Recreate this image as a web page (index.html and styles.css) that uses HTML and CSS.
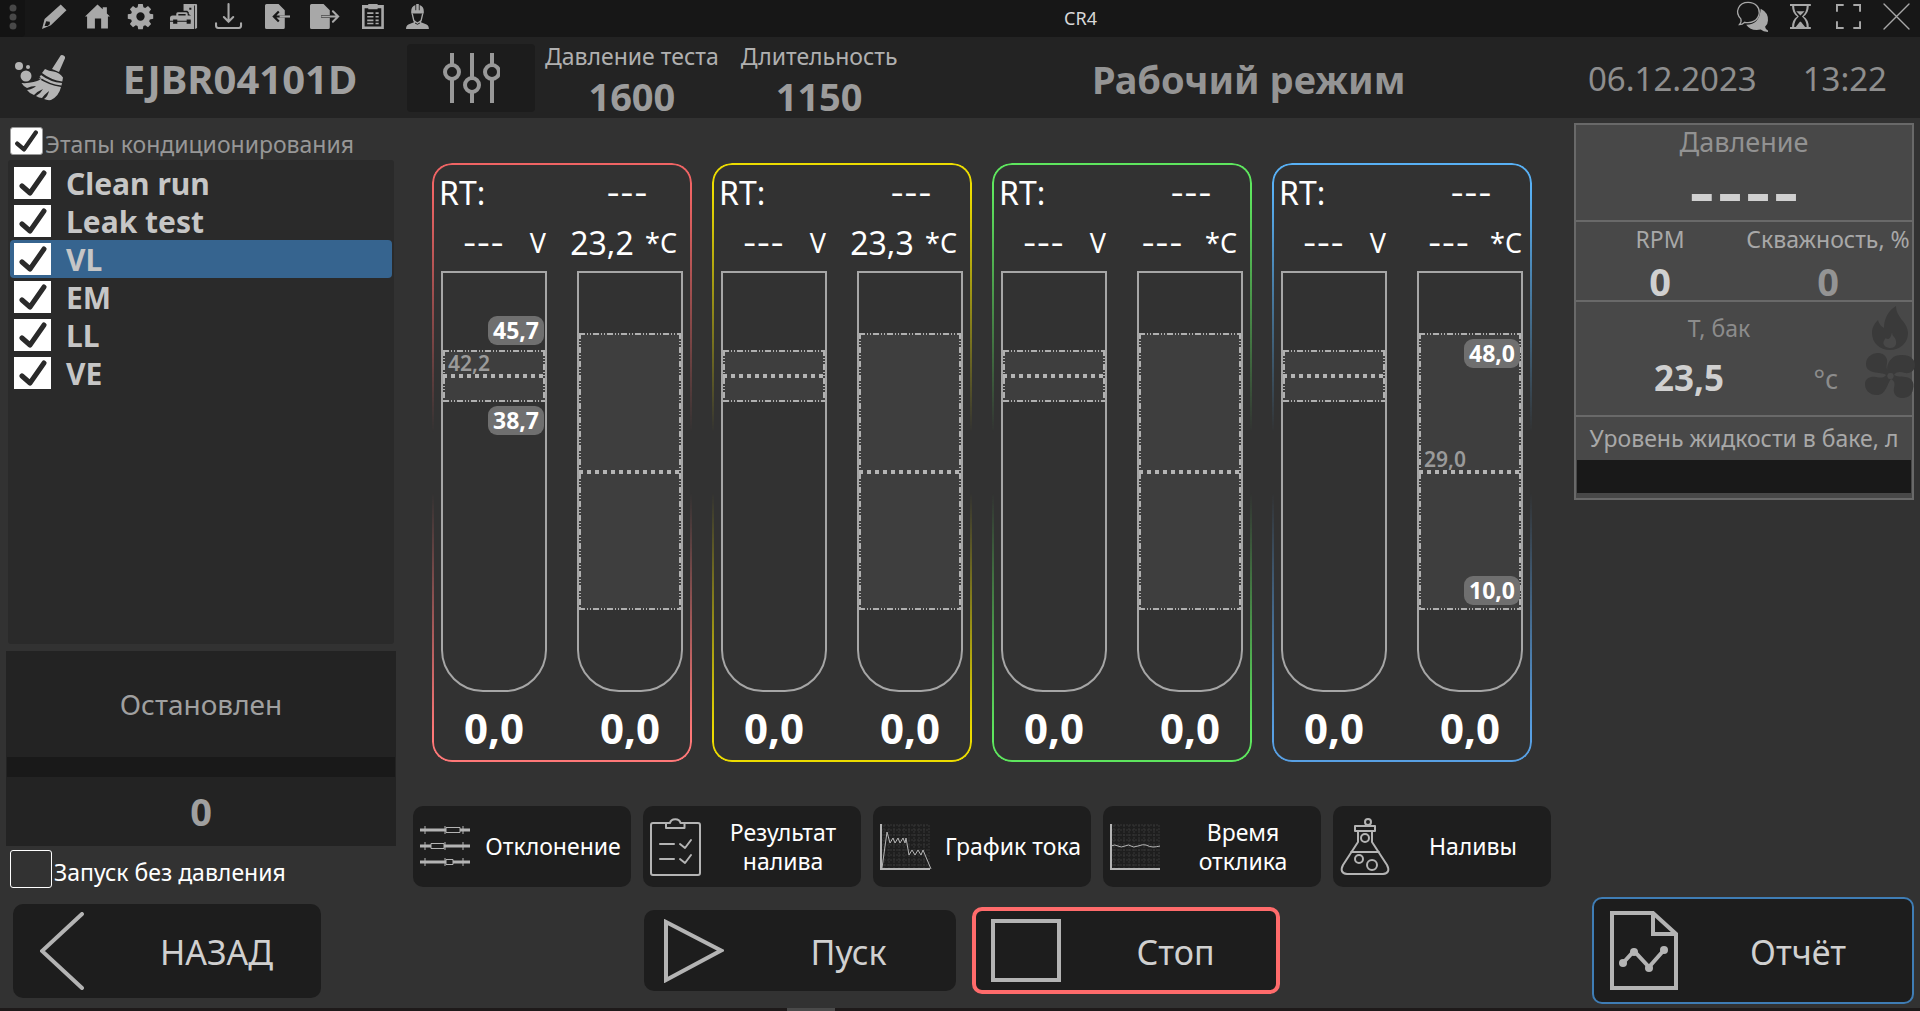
FILE: index.html
```html
<!DOCTYPE html>
<html lang="ru">
<head>
<meta charset="utf-8">
<meta name="viewport" content="width=device-width, initial-scale=1">
<title>CR4</title>
<link rel="stylesheet" href="styles.css">
</head>
<body>
<header class="titlebar">
  <button class="tb-dots" aria-label="Меню"><svg width="8" height="26" viewBox="0 0 8 26"><circle cx="4" cy="4" r="3.5"/><circle cx="4" cy="13" r="3.5"/><circle cx="4" cy="22" r="3.5"/></svg></button>
  <nav class="tb-group tb-first">
    <button aria-label="Правка"><svg viewBox="0 0 24 24"><path fill-rule="evenodd" d="M18 .5 23.500 6 8.500 20.500 0 24l2.500-9.500zM4 16.500l-1.500 4.500 3 0 2-1.500 0-2.500z"/></svg></button>
    <button aria-label="Домой"><svg viewBox="0 0 24 24"><path d="M12 .5 17 5V3h4v6l3 3h-2v11.500h-6.500V14h-6v9.500H2V12H0z"/></svg></button>
    <button aria-label="Настройки"><svg viewBox="0 0 24 24"><path fill-rule="evenodd" d="M9.800 0h4.400l.6 3.200 1.700.7L19.200 2l3 3-1.900 2.700.7 1.700 3.200.5v4.300l-3.200.6-.7 1.700 1.900 2.700-3 3-2.700-1.900-1.700.7-.6 3.200H9.800l-.6-3.200-1.700-.7-2.700 1.900-3-3 1.900-2.700-.7-1.700-3.200-.6V9.900L3 9.400l.7-1.700L1.800 5l3-3 2.700 1.900 1.700-.7zM12 8a4 4 0 1 0 0 8 4 4 0 0 0 0-8z"/></svg></button>
    <button aria-label="Инструменты"><svg viewBox="0 0 26 24"><path fill-rule="evenodd" d="M13 0h12a1 1 0 0 1 1 1v22l-2 1V1.500h-.8V24H20V11l-2-1.500V8l-1.500-1.500H13zM18.500 3.500v2h2v-2z"/><path fill-rule="evenodd" d="M6 11V9.500Q6 8 7.500 8h8Q17 8 17 9.500V11h3q3 0 3 2.500V16h-3v-1h-4v1H7v-1H3v1H0v-2.500Q0 11 2.500 11zm2 0h7V9.500H8zM0 17h3v2h4v-2h9v2h4v-2h3v7H0z"/></svg></button>
  </nav>
  <nav class="tb-group tb-second">
    <button aria-label="Загрузить"><svg viewBox="0 0 26 24"><path class="ln" d="M13 0v17M8.500 12.500 13 17l4.500-4.500M1 18.500V21q0 2 2 2h20q2 0 2-2v-2.500"/></svg></button>
    <button aria-label="Импорт"><svg viewBox="0 0 24 24"><path d="M0 1.500Q0 0 1.500 0H13l6 6v5h-8l3-3-1.500-1.500L7 12l5.500 5.500L14 16l-3-3h8v9.500q0 1.500-1.500 1.500h-16Q0 24 0 22.500z"/><path d="M14 11h10v2H14z"/></svg></button>
    <button aria-label="Экспорт"><svg viewBox="0 0 28 24"><path d="M0 1.500Q0 0 1.500 0H13l6 6v4.500h-8v3h8v9q0 1.500-1.500 1.500h-16Q0 24 0 22.500z"/><path class="ln" d="M12 12h15M22 7l5 5-5 5"/></svg></button>
    <button aria-label="Журнал"><svg viewBox="0 0 22 24"><path fill-rule="evenodd" d="M0 1h6V0h9v1h6v23H0zM2.500 4v17.500h16V4H15v1H6V4z"/><path d="M5 8h6v1.500H5zm8 0h3v1.500h-3zM5 11.500h6V13H5zm8 0h3V13h-3zM5 15h6v1.500H5zm8 0h3v1.500h-3zM5 18h6v1.500H5zm8 0h3v1.500h-3z"/></svg></button>
    <button class="tb-slim" aria-label="Оператор"><svg viewBox="0 0 22 24"><path d="M5 9V7q0-4.500 4-6v5h.8V0h2.500v6h.8V1q4 1.500 4 6v2zM0 24q0-4 4-5l3-1.200L11 20l4-2.200 3 1.200q4 1 4 5z"/><path class="thin" d="M6 9.500 7.500 16 11 18.500 14.500 16 16 9.500M8 16v3M14 16v3"/></svg></button>
  </nav>
  <div class="tb-title">CR4</div>
  <nav class="tb-group tb-second">
    <button aria-label="Сообщения"><svg class="chat" viewBox="0 0 34 32"><path d="M25.500 8q8 4 7.500 12 0 4-3 6.500.5 3 3 4v1.500q-5 0-7.500-2.500-10 2-15-5 14 0 15-16.500z"/><path class="thin" d="M3.500 24.500q2.500-3 1.500-6C-2 11 3 1.500 12.500 1.500c8 0 12 5.500 11.500 11-1 8-8.500 11-15 9.500-2 2-3.500 2.500-5.500 2.500z"/></svg></button>
    <button aria-label="Ожидание"><svg viewBox="0 0 20 24"><path fill-rule="evenodd" d="M0 0h20v2h-2q0 7-5 10 5 3 5 10h2v2H0v-2h2q0-7 5-10Q2 9 2 2H0zm4 2q0 6 4.500 10Q4 16 4 22h1.500l4-5h1l4 5H16q0-6-4.500-10Q16 8 16 2z"/><path d="M6 7h8l-4 4z"/></svg></button>
    <button aria-label="Во весь экран"><svg viewBox="0 0 26 26"><path class="ln sq" d="M1 8V1h7M18 1h7v7M25 18v7h-7M8 25H1v-7"/></svg></button>
    <button aria-label="Закрыть"><svg viewBox="0 0 24 24"><path class="thin" d="m0 0 24 24M24 0 0 24"/></svg></button>
  </nav>
</header>

<section class="infobar">
  <div class="product">
    <svg class="broom" width="50" height="46" viewBox="0 0 50 46"><circle cx="4" cy="11" r="4"/><circle cx="13" cy="12" r="2"/><circle cx="11" cy="21" r="5.500"/><path d="M45 1.500q1-2 3-1.200 2.500.7 2 3L44 17l-7-3zM30 14q4 2 8.500 2.500 6 1 9.500 6l-.7 4Q36 25 27 18zM26 20q9 7 21 8l-.5 2.500Q34 29 24.500 22zM23.500 23.500Q33 30 46 32q-2 9-10 13-4 .5-7-1 4-3 5-8-5 4-7 7-3 0-6-2 5-3 7-7-5 2-9 6-5-2-7-5 6-1 9-4-5 0-9 2-4-2-5.500-5 10 1 21.500-4.500z"/></svg>
    <div class="product-name">EJBR04101D</div>
  </div>
  <button class="tune" aria-label="Параметры"><svg width="58" height="54" viewBox="0 0 58 54"><path d="M10 2v12M10 28v24M30 2v25M30 41v11M50 2v12M50 28v24"/><circle cx="10" cy="21" r="7"/><circle cx="30" cy="34" r="7"/><circle cx="50" cy="21" r="7"/></svg></button>
  <div class="metric"><span>Давление теста</span><b>1600</b></div>
  <div class="metric"><span>Длительность</span><b>1150</b></div>
  <h1>Рабочий режим</h1>
  <time>06.12.2023</time>
  <time>13:22</time>
</section>

<main class="workspace">
  <aside class="left">
    <label class="stages-all"><input type="checkbox" class="box box-all" checked>Этапы кондиционирования</label>
    <ul class="stages">
      <li><label><input type="checkbox" class="box" checked>Clean run</label></li>
      <li><label><input type="checkbox" class="box" checked>Leak test</label></li>
      <li class="selected"><label><input type="checkbox" class="box" checked>VL</label></li>
      <li><label><input type="checkbox" class="box" checked>EM</label></li>
      <li><label><input type="checkbox" class="box" checked>LL</label></li>
      <li><label><input type="checkbox" class="box" checked>VE</label></li>
    </ul>
    <div class="status">
      <div class="status-text">Остановлен</div>
      <div class="status-bar"></div>
      <div class="status-count">0</div>
    </div>
    <label class="nopressure"><input type="checkbox" class="box box-empty">Запуск без давления</label>
  </aside>

  <section class="center">
    <div class="channels">
      <article class="channel red">
        <div class="row"><span class="rt">RT:</span><span class="dash">---</span></div>
        <div class="row"><span class="reading"><i class="dash">---</i><small>V</small></span><span class="reading"><i>23,2</i><small>*C</small></span></div>
        <div class="tubes">
          <div class="tube"><div class="zone volts"><em>42,2</em><b class="tag above">45,7</b><b class="tag below">38,7</b></div></div>
          <div class="tube"><div class="zone temp"></div></div>
        </div>
        <div class="totals"><b>0,0</b><b>0,0</b></div>
      </article>
      <article class="channel yellow">
        <div class="row"><span class="rt">RT:</span><span class="dash">---</span></div>
        <div class="row"><span class="reading"><i class="dash">---</i><small>V</small></span><span class="reading"><i>23,3</i><small>*C</small></span></div>
        <div class="tubes">
          <div class="tube"><div class="zone volts"></div></div>
          <div class="tube"><div class="zone temp"></div></div>
        </div>
        <div class="totals"><b>0,0</b><b>0,0</b></div>
      </article>
      <article class="channel green">
        <div class="row"><span class="rt">RT:</span><span class="dash">---</span></div>
        <div class="row"><span class="reading"><i class="dash">---</i><small>V</small></span><span class="reading"><i class="dash">---</i><small>*C</small></span></div>
        <div class="tubes">
          <div class="tube"><div class="zone volts"></div></div>
          <div class="tube"><div class="zone temp"></div></div>
        </div>
        <div class="totals"><b>0,0</b><b>0,0</b></div>
      </article>
      <article class="channel blue">
        <div class="row"><span class="rt">RT:</span><span class="dash">---</span></div>
        <div class="row"><span class="reading"><i class="dash">---</i><small>V</small></span><span class="reading"><i class="dash">---</i><small>*C</small></span></div>
        <div class="tubes">
          <div class="tube"><div class="zone volts"></div></div>
          <div class="tube"><div class="zone temp"><em>29,0</em><b class="tag high">48,0</b><b class="tag low">10,0</b></div></div>
        </div>
        <div class="totals"><b>0,0</b><b>0,0</b></div>
      </article>
    </div>

    <nav class="tools">
      <button>
        <svg viewBox="0 0 52 58"><g id="rod"><path class="rod" d="M1 12h50"/><path class="hair" d="M6 8v8M26 8v8M44 8v8"/></g><use href="#rod" y="16"/><use href="#rod" y="32"/><path class="slot" d="M27 9.500h14v5H27zM12 25.500h13v5H12zM27 41.500h7v5h-7z"/></svg>
        <span>Отклонение</span>
      </button>
      <button>
        <svg viewBox="0 0 52 58"><path class="pen" d="M17 5H4q-2 0-2 2v48q0 2 2 2h45q2 0 2-2V7q0-2-2-2H36M17 5v5h18.500V5h-4c-1-5-9.500-5-10.500 0zM11 26h14M11 41h14M31 26l5 4 6-8M31 41l5 4 6-8"/></svg>
        <span>Результат налива</span>
      </button>
      <button>
        <svg viewBox="0 0 52 58"><path class="grid" d="M5 7v44M10 7v44M15 7v44M20 7v44M25 7v44M30 7v44M35 7v44M40 7v44M45 7v44M50 7v44M2 7h48M2 12h48M2 17h48M2 22h48M2 27h48M2 32h48M2 37h48M2 42h48M2 47h48"/><path class="axis" d="M2 6v45h49"/><path class="hair" d="M3 50 8 14l3 11 3-5 2 5 3-5 2 5 3-5 2 5 1-5 3 17 3-5 3 5 3-5 3 5 2-5 8 19"/></svg>
        <span>График тока</span>
      </button>
      <button>
        <svg viewBox="0 0 52 58"><path class="grid" d="M5 7v44M10 7v44M15 7v44M20 7v44M25 7v44M30 7v44M35 7v44M40 7v44M45 7v44M50 7v44M2 7h48M2 12h48M2 17h48M2 22h48M2 27h48M2 32h48M2 37h48M2 42h48M2 47h48"/><path class="axis" d="M2 6v45h49"/><path class="hair" d="M2 28q4-2 7 0t7 0 6 0 7 0 8-1q4 2 7 2t7-1"/></svg>
        <span>Время отклика</span>
      </button>
      <button>
        <svg viewBox="0 0 52 58"><path class="pen" d="M16 8h20v5H16zM19 13v11L4 47q-4 8 4 9h36q8-1 4-9L33 24V13M12 34h28"/><circle class="pen" cx="29" cy="4" r="3"/><circle class="pen" cx="26" cy="20" r="4"/><circle class="pen" cx="20" cy="41" r="4"/><circle class="pen" cx="33" cy="47" r="5"/></svg>
        <span>Наливы</span>
      </button>
    </nav>
  </section>

  <aside class="right">
    <section class="cell pressure"><h2>Давление</h2><div class="big">----</div></section>
    <section class="cell duo">
      <div><h3>RPM</h3><b>0</b></div>
      <div><h3>Скважность, %</h3><b class="dim">0</b></div>
    </section>
    <section class="cell tank">
      <h3>T, бак</h3>
      <div class="tank-row"><b>23,5</b><span>°c</span></div>
      <div class="tank-icons">
        <svg width="36" height="44" viewBox="0 0 36 44"><path fill-rule="evenodd" d="M24 0c0 12 12 16 12 27 0 10-8 17-18 17S0 37 0 27c0-6 3-10 6-13q1 5 6 8C12 12 17 4 24 0zM20 26c-1 6-3 7-4 7q-2 0-2-1c-6 6 0 10 4 10 8 0 7-8 4-11q-2-2-2-5z"/></svg>
        <svg width="50" height="46" viewBox="0 0 50 46"><path fill-rule="evenodd" d="M23 19C20 13 26 1 37 2c9 0 13 5 13 10s-4 9-10 8c-4-1-8-2-11 2 3 2 6 1 11 2 6 0 10 5 8 12-1 7-6 9-11 9-7 0-9-6-8-10s1-7-3-9c-4 5-5 16-14 16C4 42 0 37 0 31s6-8 11-7 8 1 10-2c-5-4-20 0-20-11C1 4 7 0 13 0c7 0 10 6 9 10-1 5 0 6 1 9zm2.500 1a3 3 0 1 0 0 6 3 3 0 0 0 0-6z"/><circle class="hub" cx="25.500" cy="23" r="3"/></svg>
      </div>
    </section>
    <section class="cell level"><h3>Уровень жидкости в баке, л</h3><div class="level-bar"></div></section>
  </aside>
</main>

<footer class="actions">
  <button class="act back"><svg width="44" height="78" viewBox="0 0 44 78"><path stroke-linecap="round" d="M42 2 2 39l40 37"/></svg><span>НАЗАД</span></button>
  <div class="run">
    <button class="act start"><svg width="60" height="64" viewBox="0 0 60 64"><path d="M2 3v58l55-29.500z"/></svg><span>Пуск</span></button>
    <button class="act stop"><svg width="70" height="63" viewBox="0 0 70 63"><path d="M2 2h66v59H2z"/></svg><span>Стоп</span></button>
  </div>
  <button class="act report"><svg width="68" height="79" viewBox="0 0 68 79"><path d="M2 2h41l23 21v54H2zM43 2v21h23M13 52l11-12 15 16 15-17"/><g class="pt"><circle cx="13" cy="52" r="4"/><circle cx="24" cy="41" r="4"/><circle cx="39" cy="57" r="4"/><circle cx="54" cy="39" r="4"/></g></svg><span>Отчёт</span></button>
</footer>
<div class="scroll"><i></i></div>
</body>
</html>
```
FILE: styles.css
```css
* { box-sizing: border-box; }
body {
  margin: 0;
  min-height: 100vh;
  display: flex;
  flex-direction: column;
  background: #323232;
  color: #fff;
  font-family: "Noto Sans", "Open Sans", sans-serif;
  font-size: 23px;
}
button {
  font: inherit;
  color: inherit;
  border: 0;
  padding: 0;
  background: none;
  display: flex;
  align-items: center;
  justify-content: center;
}
h1, h2, h3, ul { margin: 0; padding: 0; }
h2, h3 { font-weight: 400; }
i, em { font-style: normal; }

/* title bar */
.titlebar { display: flex; height: 37px; background: #171717; }
.tb-dots { width: 25px; background: #131313; border-radius: 0 0 4px 0; padding-bottom: 4px; }
.tb-dots svg { fill: #484848; }
.tb-group { display: flex; }
.tb-first { margin-left: 8px; }
.tb-first button { width: 43px; }
.tb-second button { width: 48px; }
.tb-second .tb-slim { width: 40px; }
.tb-group button { padding-bottom: 4px; }
.tb-group svg { height: 25px; fill: #a8a8a8; overflow: visible; }
.tb-group .chat { height: 31px; }
.ln, .thin { fill: none; stroke: #a8a8a8; stroke-width: 2; stroke-linecap: round; }
.ln.sq { stroke-linecap: butt; }
.thin { stroke-width: 1.3; }
.tb-title { flex: 1; text-align: center; font-size: 18px; line-height: 36px; padding-right: 4px; color: #d8d8d8; }

/* information bar */
.infobar { display: flex; align-items: center; height: 81px; padding-right: 33px; background: #232323; color: #a0a0a0; }
.product { width: 407px; display: flex; align-items: center; padding-left: 15px; }
.broom { fill: #b4b4b4; }
.product-name { flex: 1; text-align: center; font-size: 40px; line-height: 52px; font-weight: 700; padding: 2px 0 0 8px; }
.tune { width: 128px; height: 68px; margin-right: 10px; background: #1c1c1c; border-radius: 4px; }
.tune svg { fill: none; stroke: #989898; stroke-width: 4; }
.metric { display: flex; flex-direction: column; align-items: center; margin-right: 22px; color: #b0b0b0; }
.metric span { line-height: 38px; }
.metric b { font-size: 38px; line-height: 43px; color: #9c9c9c; }
.infobar h1 { flex: 1; text-align: center; font-size: 38px; line-height: 52px; padding: 2px 10px 0 0; color: #949494; }
.infobar time { font-size: 33px; line-height: 48px; padding-top: 2px; margin-left: 46px; color: #8e8e8e; }
.infobar h1 + time { margin-left: 0; }

/* workspace */
.workspace {
  flex: 1;
  display: grid;
  grid-template-columns: 390px 1fr 340px;
  gap: 12px;
  padding: 5px 6px 0;
}

/* left column */
.left { display: flex; flex-direction: column; }
.box { appearance: none; margin: 0; width: 37px; height: 32px; flex: none; background: #fff center / 28px 26px no-repeat; }
.box:checked { background-image: url("data:image/svg+xml,%3Csvg xmlns='http://www.w3.org/2000/svg' viewBox='0 0 28 26'%3E%3Cpath d='M3 16l8 7L25 3' fill='none' stroke='%232a2a2a' stroke-width='5' stroke-linecap='round' stroke-linejoin='round'/%3E%3C/svg%3E"); }
.box-all { width: 33px; height: 28px; background-size: 25px 22px; border: 1px solid #999; border-radius: 3px; }
.stages-all { display: flex; align-items: flex-start; gap: 2px; height: 37px; padding: 4px 4px 0; line-height: 34px; color: #979797; }
.stages { flex: 1; margin: 0 2px; padding: 4px 2px; list-style: none; background: #2a2a2a; border-radius: 3px; }
.stages li { height: 38px; border-radius: 4px; padding-left: 4px; }
.stages label { display: flex; align-items: center; gap: 15px; height: 38px; font-size: 30px; font-weight: 700; color: #c6c6c6; }
.stages .selected { background: #36648f; }
.status { margin-top: 7px; background: #232323; color: #a0a0a0; text-align: center; }
.status-text { font-size: 28px; line-height: 106px; }
.status-bar { height: 20px; margin: 0 1px; background: #191919; }
.status-count { font-size: 38px; font-weight: 700; line-height: 69px; }
.nopressure { display: flex; gap: 2px; height: 45px; padding: 4px 4px 0; line-height: 44px; }
.box-empty { width: 42px; height: 38px; background: none; border: 1px solid #fff; border-radius: 3px; }

/* measuring channels */
.center { display: flex; flex-direction: column; }
.channels { flex: 1; display: grid; grid-template-columns: repeat(4, 1fr); gap: 20px; padding: 40px 30px 44px 24px; }
.channel { position: relative; display: flex; flex-direction: column; padding: 4px 9px 2px; --line: #f06464; --end: #ff7878; }
.channel::before {
  content: "";
  position: absolute;
  inset: 0;
  padding: 2px;
  border-radius: 20px;
  background: linear-gradient(var(--line) 5%, transparent 45%, transparent 55%, var(--end) 95%);
  mask: linear-gradient(#000 0 0) content-box exclude, linear-gradient(#000 0 0);
  pointer-events: none;
}
.yellow { --line: #ecdc00; --end: #ecdc00; }
.green { --line: #5ee65e; --end: #5ee65e; }
.blue { --line: #58b0f4; --end: #58a0e4; }
.row { display: grid; grid-template-columns: 106px 1fr; column-gap: 24px; height: 50px; align-items: center; }
.row > .dash { text-align: center; padding-left: 8px; }
.red .row > .dash { padding-left: 0; }
.rt, .reading i { font-size: 32px; }
.rt { margin-left: -2px; }
.row .dash { font-family: "Inter", sans-serif; font-size: 30px; padding-top: 2px; }
.reading { display: flex; align-items: center; justify-content: space-between; }
.reading + .reading { margin-left: -8px; padding-right: 5px; }
.blue .reading + .reading { margin-left: 0; padding-right: 0; }
.reading i { flex: 1; text-align: center; padding-right: 4px; }
.reading small { font-size: 27px; padding-right: 1px; }
.tubes { flex: 1; display: flex; justify-content: space-between; margin-top: 4px; }
.tube { position: relative; width: 106px; border: 2px solid #a6a6a6; border-radius: 0 0 42px 42px; }
.zone {
  --dd: #b0b0b0 0 6px, transparent 6px 8px, #b0b0b0 8px 9px, transparent 9px 11px, #b0b0b0 11px 12px, transparent 12px 14px;
  position: absolute;
  left: 0;
  right: 0;
  background:
    repeating-linear-gradient(90deg, #b4b4b4 0 4px, transparent 4px 8px) 0 50% / 100% 4px no-repeat,
    repeating-linear-gradient(90deg, var(--dd)) 0 0 / 100% 2px no-repeat,
    repeating-linear-gradient(90deg, var(--dd)) 0 100% / 100% 2px no-repeat,
    repeating-linear-gradient(var(--dd)) 0 0 / 2px 100% no-repeat,
    repeating-linear-gradient(var(--dd)) 100% 0 / 2px 100% no-repeat,
    #3e3e3e;
}
.volts { top: 77px; height: 52px; }
.temp { top: 60px; height: 277px; }
.zone em { position: absolute; left: 5px; bottom: 50%; font-size: 21px; line-height: 26px; font-weight: 600; color: #9a9a9a; }
.tag { position: absolute; right: 1px; width: 56px; height: 29px; border-radius: 9px; background: #6f6f6f; font-size: 23px; line-height: 29px; text-align: center; }
.above { bottom: 100%; margin-bottom: 5px; }
.below { top: 100%; margin-top: 4px; }
.high { top: 6px; }
.low { bottom: 5px; }
.totals { display: flex; justify-content: space-between; }
.totals b { width: 106px; text-align: center; font-size: 42px; line-height: 64px; padding-top: 4px; }

/* tool buttons */
.tools { display: grid; grid-template-columns: repeat(5, 1fr); gap: 12px; padding: 0 11px 4px 5px; }
.tools button { height: 81px; padding: 0 6px; border-radius: 10px; background: #1e1e1e; line-height: 29px; gap: 10px; }
.tools svg { flex: none; width: 52px; height: 58px; overflow: visible; }
.tools span { flex: 1; text-align: center; }
.pen { fill: none; stroke: #b4b4b4; stroke-width: 2; stroke-linecap: round; stroke-linejoin: round; }
.rod { stroke: #b4b4b4; stroke-width: 3; }
.hair { fill: none; stroke: #b4b4b4; stroke-width: 1; }
.slot { fill: #1e1e1e; stroke: #b4b4b4; stroke-width: 1; }
.axis { fill: none; stroke: #b4b4b4; stroke-width: 2; }
.grid { stroke: #363636; stroke-width: 1; stroke-dasharray: 2 1; }

/* right column */
.right { align-self: start; border: 2px solid #696969; background: #484848; }
.cell { text-align: center; color: #a8a8a8; }
.cell + .cell { border-top: 2px solid #696969; }
.cell h3 { font-size: 23px; }
.cell b { color: #d0d0d0; font-size: 38px; }
.pressure { height: 95px; }
.pressure h2 { font-size: 27px; line-height: 34px; color: #929292; }
.big { font-family: "Inter", sans-serif; font-weight: 700; font-size: 60px; line-height: 46px; padding-top: 11px; color: #d0d0d0; }
.duo { display: grid; grid-template-columns: 1fr 1fr; height: 80px; }
.duo > div { display: flex; flex-direction: column; align-items: center; white-space: nowrap; }
.duo h3 { line-height: 34px; }
.duo b { line-height: 50px; }
.cell .dim { color: #949494; }
.tank { position: relative; height: 115px; color: #8c8c8c; padding-right: 50px; }
.tank h3 { line-height: 52px; }
.tank-row { display: flex; justify-content: space-between; align-items: center; padding: 0 24px 0 78px; }
.tank-row b { font-size: 35px; line-height: 48px; }
.tank-row span { font-size: 27px; }
.tank-icons { position: absolute; right: -3px; top: 4px; display: flex; flex-direction: column; align-items: center; gap: 3px; fill: #3a3a3a; }
.hub { fill: #484848; }
.level { padding: 0 1px 5px; }
.level h3 { line-height: 43px; white-space: nowrap; }
.level-bar { height: 33px; background: #191919; }

/* bottom actions */
.actions { display: grid; grid-template-columns: 1fr auto 1fr; align-items: center; padding: 6px 6px 4px 13px; }
.act { border-radius: 10px; background: #1d1d1d; font-size: 34px; line-height: 48px; color: #d0d0d0; }
.act svg { flex: none; fill: none; stroke: #b4b4b4; stroke-width: 4; }
.act span { flex: 1; text-align: center; padding-top: 2px; }
.act .pt { fill: #b4b4b4; stroke: none; }
.back { width: 308px; height: 94px; padding: 0 0 0 27px; }
.back span { padding-left: 28px; }
.run { display: flex; align-items: center; gap: 16px; margin-right: 4px; }
.start { width: 312px; height: 81px; padding: 0 0 0 20px; }
.start span { padding-left: 18px; }
.stop { width: 308px; height: 87px; padding: 0 0 0 15px; border: 4px solid #ff6b6b; }
.stop span { padding-left: 15px; }
.report { justify-self: end; width: 322px; height: 107px; padding: 0 0 0 16px; border: 2px solid #3f7db5; }
.report span { padding-left: 6px; }
.scroll { display: flex; height: 3px; background: #1e1a1a; padding-left: 41%; }
.scroll i { width: 48px; background: #4a4a4a; }
```
